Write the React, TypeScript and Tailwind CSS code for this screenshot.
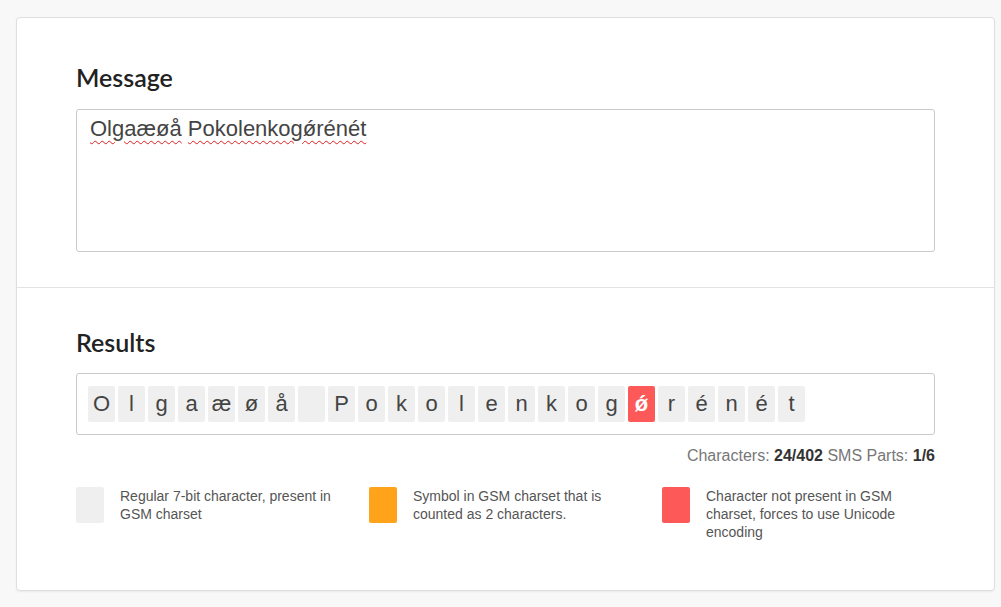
import React from 'react';

const message = 'Olgaæøå Pokolenkogǿrénét';

// chars outside the GSM 7-bit set
const unicodeChars = ['ǿ'];
const doubleChars = ['^', '{', '}', '\\', '[', '~', ']', '|', '€'];

const legend = [
  { color: 'bg-[#efefef]', text: 'Regular 7-bit character, present in GSM charset' },
  { color: 'bg-[#ffa31a]', text: 'Symbol in GSM charset that is counted as 2 characters.' },
  { color: 'bg-[#fd5959]', text: 'Character not present in GSM charset, forces to use Unicode encoding' },
];

const CharBox = ({ ch }: { ch: string }) => {
  const isUnicode = unicodeChars.includes(ch);
  const isDouble = doubleChars.includes(ch);
  let cls = 'bg-[#efefef] text-[#444]';
  if (isUnicode) cls = 'bg-[#fd5959] text-white font-bold';
  else if (isDouble) cls = 'bg-[#ffa31a] text-white';

  return (
    <span className={`w-[27px] h-[36px] rounded-[2px] flex items-center justify-center text-[22px] leading-none ${cls}`}>
      {ch === ' ' ? '\u00a0' : ch}
    </span>
  );
};

const App = () => {
  const words = message.split(' ');

  return (
    <div className="min-h-[607px] bg-[#f8f8f8] pt-[17px] px-[16px] font-['Liberation_Sans',Arial,sans-serif]">
      <div className="w-[979px] h-[574px] bg-white border border-[#dedede] rounded-[4px] shadow-[0_1px_2px_rgba(0,0,0,0.06)]">
        <section className="px-[59px] pt-[44px] pb-[35px] border-b border-[#e3e3e3]">
          <h2 className="font-['Lato',sans-serif] font-semibold text-[25px] leading-[30px] text-[#222] mb-[17px]">
            Message
          </h2>
          <div className="h-[143px] border border-[#cacaca] rounded-[3px] px-[13px] pt-[4px] text-[22px] leading-[30px] text-[#444]">
            {words.map((w, i) => (
              <React.Fragment key={i}>
                {i > 0 && ' '}
                <span className="underline decoration-wavy decoration-[#e02020] decoration-1 underline-offset-[4px]">{w}</span>
              </React.Fragment>
            ))}
          </div>
        </section>

        <section className="px-[59px] pt-[39px]">
          <h2 className="font-['Lato',sans-serif] font-semibold text-[25px] leading-[30px] text-[#222] mb-[16px]">
            Results
          </h2>
          <div className="h-[62px] border border-[#cacaca] rounded-[3px] px-[11px] flex items-center gap-[3px]">
            {Array.from(message).map((ch, i) => (
              <CharBox key={i} ch={ch} />
            ))}
          </div>
          <div className="text-right text-[16px] leading-[18px] text-[#777] mt-[12px]">
            Characters: <b className="text-[#333]">24/402</b> SMS Parts: <b className="text-[#333]">1/6</b>
          </div>
          <div className="flex mt-[22px]">
            {legend.map((item, i) => (
              <div key={i} className="w-[293px] shrink-0 flex items-start gap-[16px]">
                <span className={`w-[28px] h-[36px] rounded-[2px] shrink-0 ${item.color}`} />
                <p className="w-[225px] text-[14px] leading-[18px] text-[#555]">{item.text}</p>
              </div>
            ))}
          </div>
        </section>
      </div>
    </div>
  );
};

export default App;
